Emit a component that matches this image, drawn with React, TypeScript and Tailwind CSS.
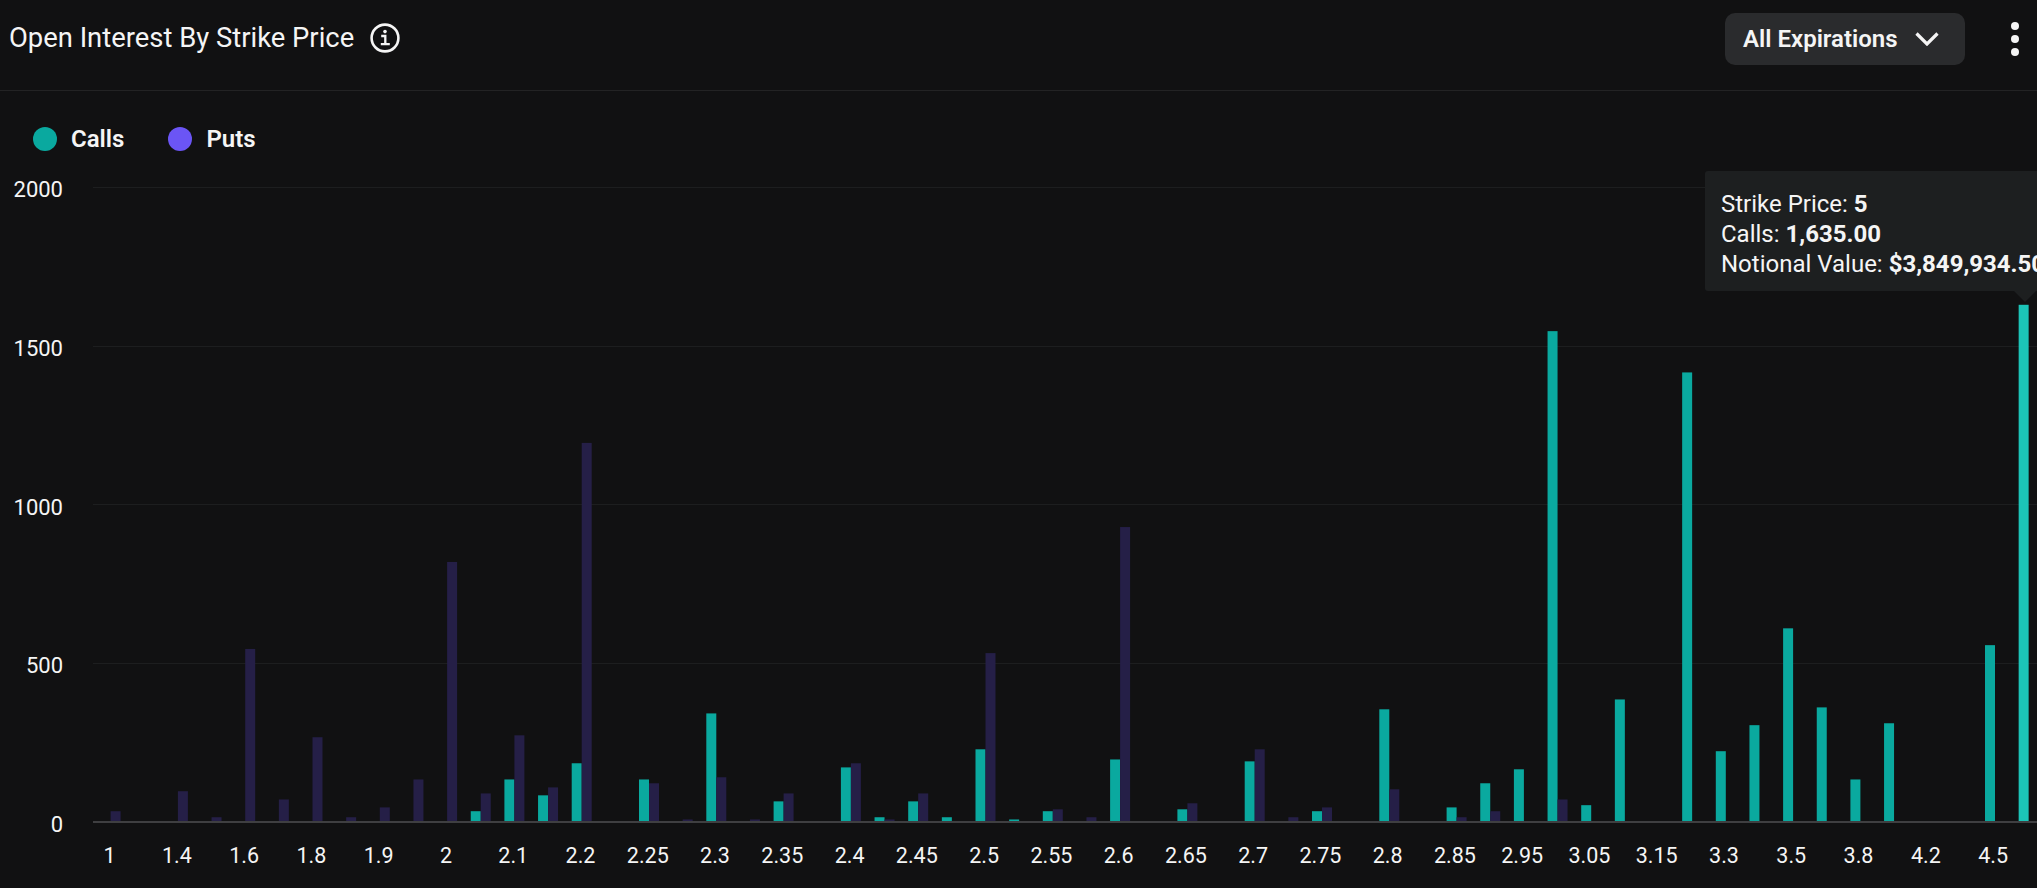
const strikes = ["1", "1.4", "1.6", "1.8", "1.9", "2", "2.1", "2.2", "2.25", "2.3", "2.35", "2.4", "2.45", "2.5", "2.55", "2.6", "2.65", "2.7", "2.75", "2.8", "2.85", "2.95", "3.05", "3.15", "3.3", "3.5", "3.8", "4.2", "4.5"];

const yTicks = ["2000", "1500", "1000", "500", "0"];

// [slot, calls, puts] for the slots that have any open interest
const rows: [number, number, number][] = [
  [0, 0, 34], [2, 0, 97], [3, 0, 15], [4, 0, 545], [5, 0, 71], [6, 0, 267], [7, 0, 15], [8, 0, 46], [9, 0, 134],
  [10, 0, 819], [11, 34, 90], [12, 134, 273], [13, 84, 109], [14, 185, 1194], [16, 134, 122], [17, 0, 8],
  [18, 342, 141], [19, 0, 8], [20, 65, 90], [22, 172, 185], [23, 15, 8], [24, 65, 90], [25, 15, 0], [26, 229, 532],
  [27, 8, 0], [28, 34, 40], [29, 0, 15], [30, 197, 929], [32, 40, 59], [34, 191, 229], [35, 0, 15], [36, 34, 46],
  [38, 355, 103], [40, 46, 15], [41, 122, 34], [42, 166, 0], [43, 1546, 71], [44, 53, 0], [45, 386, 0], [47, 1416, 0],
  [48, 223, 0], [49, 305, 0], [50, 610, 0], [51, 361, 0], [52, 134, 0], [53, 311, 0], [56, 557, 0], [57, 1629, 0],
];

const BASE = 647;
const SCALE = 0.3175;
const barX = (slot: number) => 7.6 + 33.65 * slot;

function InfoIcon() {
  return (
    <svg width="32" height="32" viewBox="0 0 32 32" fill="none" stroke="#f5f5f5" strokeWidth="2.6">
      <circle cx="16" cy="16" r="13.4" />
      <path d="M12.2 14H16.3V21.8M11.8 22.2H20.8" strokeWidth="2.3" />
      <circle cx="16" cy="9.6" r="1.8" fill="#f5f5f5" stroke="none" />
    </svg>
  );
}

function Chevron() {
  return (
    <svg width="24" height="14" viewBox="0 0 24 14" fill="none" stroke="#f5f5f5" strokeWidth="3.2">
      <path d="M1.5 1.5L12 12L22.5 1.5" />
    </svg>
  );
}

function Plot() {
  return (
    <svg width="1944" height="650" className="ml-[30px] shrink-0">
      {[12, 171, 329, 488].map((y) => (
        <rect key={y} x="0" y={y} width="1944" height="1" fill="#1d1e1f" />
      ))}
      {rows.map(([slot, calls, puts]) => (
        <g key={slot}>
          {calls > 0 && (
            <rect
              x={barX(slot)}
              y={BASE - calls * SCALE}
              width="10"
              height={calls * SCALE}
              fill={slot === 57 ? "#1cc4b8" : "#0aa99f"}
            />
          )}
          {puts > 0 && (
            <rect x={barX(slot) + 10} y={BASE - puts * SCALE} width="10" height={puts * SCALE} fill="#251f47" />
          )}
        </g>
      ))}
      <rect x="0" y="646" width="1944" height="2" fill="#3f3f41" />
    </svg>
  );
}

export default function App() {
  return (
    <div className="relative flex h-[888px] w-[2037px] flex-col overflow-hidden bg-[#111112] font-['Roboto',sans-serif] text-[#f5f5f5]">
      <div className="flex h-[91px] shrink-0 items-center justify-between border-b border-[#232324] pb-[12px] pl-[9px]">
        <div className="-mt-[2px] flex items-center gap-[15px]">
          <span className="text-[27.4px] leading-[32px]">Open Interest By Strike Price</span>
          <InfoIcon />
        </div>
        <div className="flex items-center">
          <button className="flex h-[52px] w-[240px] items-center gap-[17px] rounded-[10px] bg-[#2a2b2d] pl-[18px] text-[24px] font-semibold">
            All Expirations
            <Chevron />
          </button>
          <div className="ml-[46px] mr-[18px] flex flex-col gap-[5px]">
            <span className="h-[8px] w-[8px] rounded-full bg-[#f5f5f5]" />
            <span className="h-[8px] w-[8px] rounded-full bg-[#f5f5f5]" />
            <span className="h-[8px] w-[8px] rounded-full bg-[#f5f5f5]" />
          </div>
        </div>
      </div>

      <div className="flex h-[84px] shrink-0 items-center pl-[33px] pt-[11px] text-[24px] font-semibold">
        <span className="h-[24px] w-[24px] rounded-full bg-[#0aa99f]" />
        <span className="ml-[14px]">Calls</span>
        <span className="ml-[44px] h-[24px] w-[24px] rounded-full bg-[#6b55f5]" />
        <span className="ml-[14px]">Puts</span>
      </div>

      <div className="flex h-[663px] shrink-0 items-start">
        <div className="flex h-full w-[63px] shrink-0 flex-col justify-between pt-[2px] text-right text-[22px] leading-[26px]">
          {yTicks.map((t) => (
            <span key={t}>{t}</span>
          ))}
        </div>
        <Plot />
      </div>

      <div className="mt-[5px] flex pl-[76px] text-[21.5px] leading-[26px]">
        {strikes.map((s) => (
          <span key={s} className="w-[67.28px] shrink-0 text-center">
            {s}
          </span>
        ))}
      </div>

      <div className="absolute left-[1705px] top-[171px] h-[120px] w-[345px] rounded-[3px] bg-[#1d1f20] pl-[16px] pt-[18px] text-[24px] leading-[30px]">
        <div>
          Strike Price: <b className="font-bold">5</b>
        </div>
        <div>
          Calls: <b className="font-bold">1,635.00</b>
        </div>
        <div className="whitespace-nowrap">
          Notional Value: <b className="font-bold">$3,849,934.50</b>
        </div>
        <span className="absolute left-[309px] top-[120px] h-0 w-0 border-x-[11px] border-t-[11px] border-x-transparent border-t-[#1d1f20]" />
      </div>
    </div>
  );
}
